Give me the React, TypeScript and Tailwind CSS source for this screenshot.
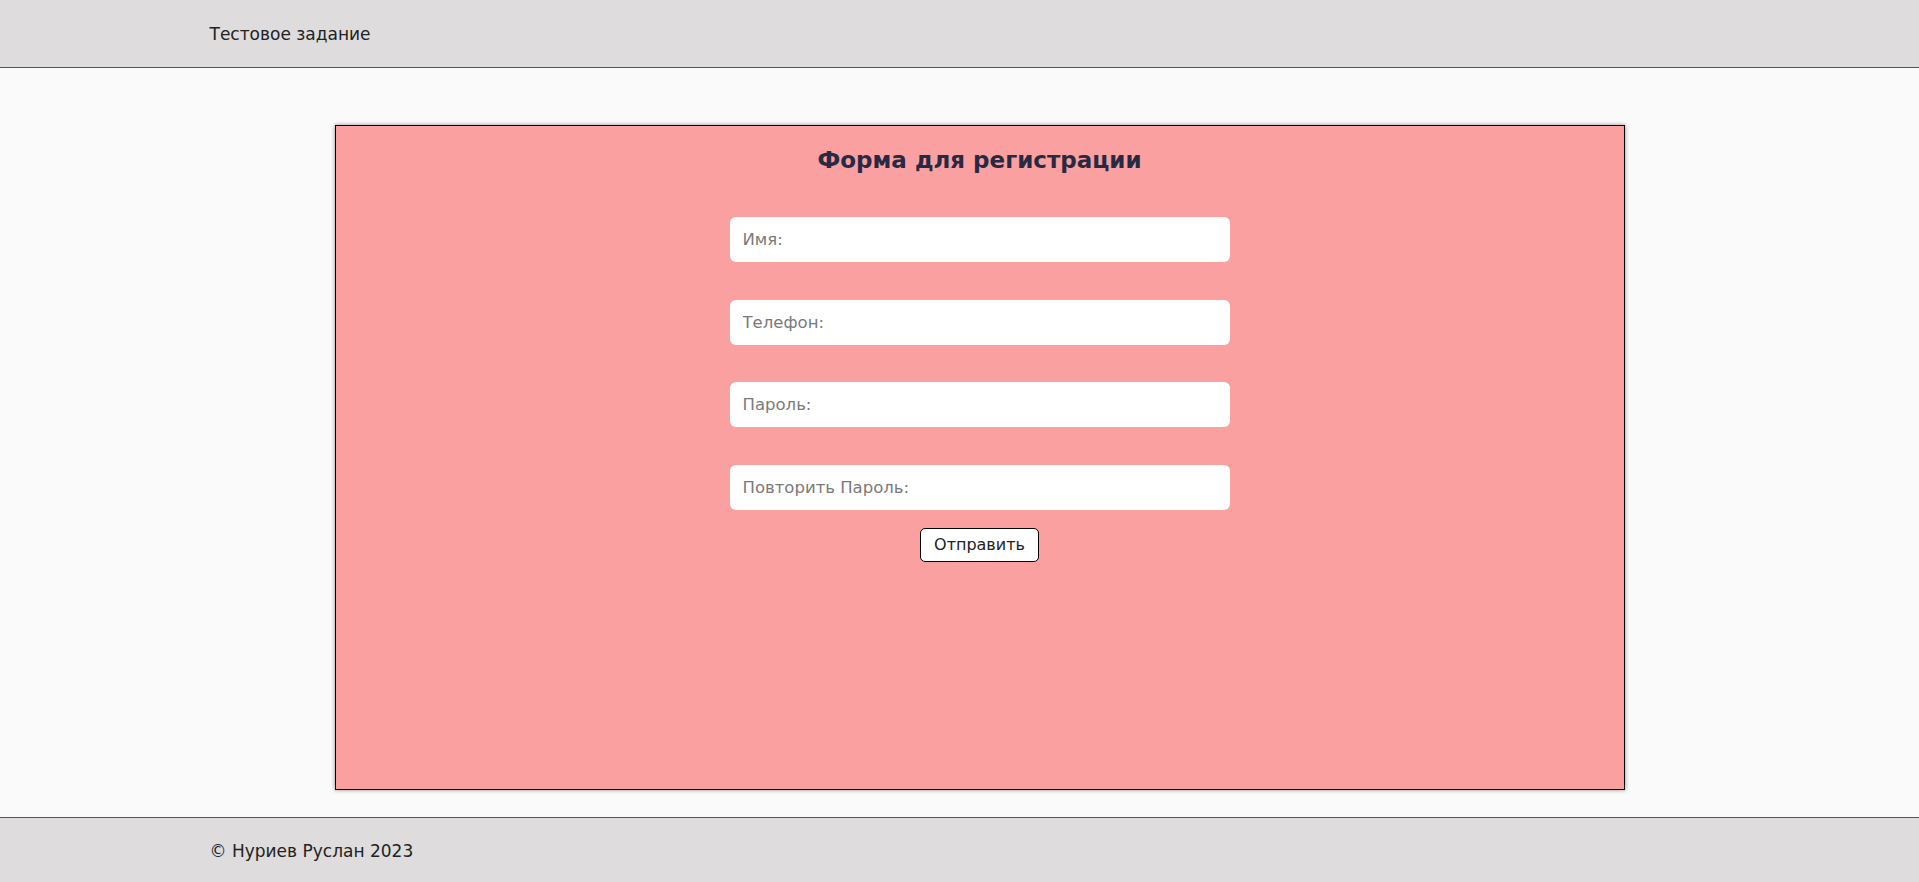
import React from 'react';

const fields = ['Имя:', 'Телефон:', 'Пароль:', 'Повторить Пароль:'];

const App: React.FC = () => {
  return (
    <div className="min-h-screen flex flex-col bg-[#fafafa] text-[#222] font-['DejaVu_Sans',sans-serif]">
      {/* Шапка */}
      <header className="h-[68px] bg-[#dedcdc] border-b border-[#555]">
        <div className="max-w-[1500px] mx-auto h-full pt-[2px] flex items-center text-[17px]">
          Тестовое задание
        </div>
      </header>

      <main className="flex-1 pt-[57px] pb-[27px]">
        <div className="max-w-[1500px] mx-auto">
          <div className="ml-[125px] w-[1290px] h-[665px] bg-[#fba0a0] border border-black shadow-[0_0_4px_rgba(0,0,0,0.45)] flex flex-col items-center">
            <h1 className="mt-[16px] text-[23px] leading-[36px] font-bold text-[#262a44]">
              Форма для регистрации
            </h1>
            <form className="mt-[39px] flex flex-col items-center">
              <div className="flex flex-col gap-[37.5px]">
                {fields.map((f) => (
                  <input
                    key={f}
                    placeholder={f}
                    className="w-[500px] h-[45px] rounded-[6px] bg-white px-[13px] text-[16.5px] outline-none placeholder:text-[#7a7a7a]"
                  />
                ))}
              </div>
              <button
                type="button"
                className="mt-[18px] w-[119px] h-[34px] rounded-[5px] border border-black bg-white text-[16px] text-[#222]"
              >
                Отправить
              </button>
            </form>
          </div>
        </div>
      </main>

      <footer className="h-[66px] bg-[#dedcdc] border-t border-[#555]">
        <div className="max-w-[1500px] mx-auto h-full pt-[3px] flex items-center text-[17px]">
          © Нуриев Руслан 2023
        </div>
      </footer>
    </div>
  );
};

export default App;
